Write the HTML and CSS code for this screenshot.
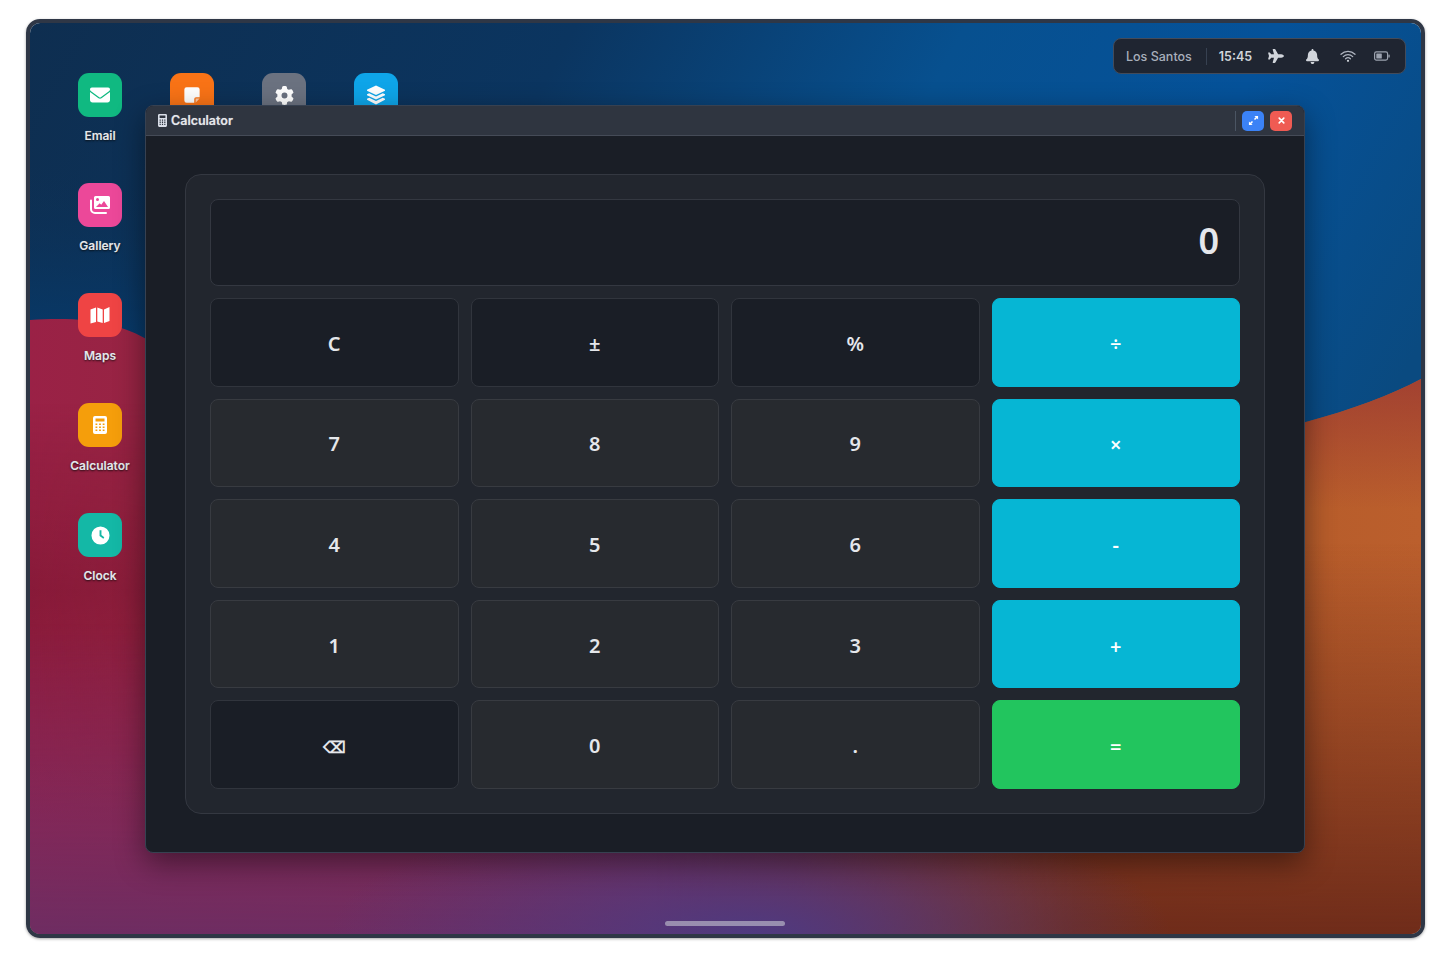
FILE: index.html
```html
<!DOCTYPE html>
<html lang="en">
<head>
  <meta charset="UTF-8" />
  <title>Calculator</title>
  <link rel="stylesheet" href="styles.css">
</head>
<body>
  <div class="frame">
    <svg class="wallpaper" viewBox="0 0 1390 911" preserveAspectRatio="none">
      <defs>
        <linearGradient id="sky" x1="0" y1="0" x2="1" y2="0.35">
          <stop offset="0" stop-color="#0e2e50"/>
          <stop offset="0.35" stop-color="#0b3560"/>
          <stop offset="0.6" stop-color="#07508f"/>
          <stop offset="0.8" stop-color="#05529a"/>
          <stop offset="1" stop-color="#0a4a80"/>
        </linearGradient>
        <linearGradient id="skyLow" x1="0" y1="0" x2="0" y2="1">
          <stop offset="0" stop-color="#0e2e50" stop-opacity="0"/>
          <stop offset="1" stop-color="#043e74"/>
        </linearGradient>
        <linearGradient id="land" x1="0" y1="0" x2="1" y2="0">
          <stop offset="0" stop-color="#9a2146"/>
          <stop offset="0.5" stop-color="#8c3536"/>
          <stop offset="0.93" stop-color="#b85d2b"/>
          <stop offset="1" stop-color="#bb5f2d"/>
        </linearGradient>
        <linearGradient id="crest" x1="0" y1="0" x2="0" y2="1">
          <stop offset="0" stop-color="#9c3a32" stop-opacity=".8"/>
          <stop offset="1" stop-color="#9c3a32" stop-opacity="0"/>
        </linearGradient>
        <linearGradient id="shade" x1="0" y1="0" x2="0" y2="1">
          <stop offset="0" stop-color="#7c1530" stop-opacity="0"/>
          <stop offset="0.45" stop-color="#7c1530" stop-opacity=".6"/>
          <stop offset="1" stop-color="#7c1530" stop-opacity="0"/>
        </linearGradient>
        <linearGradient id="dusk" x1="0" y1="0" x2="0" y2="1">
          <stop offset="0" stop-color="#7a2a66" stop-opacity="0"/>
          <stop offset="1" stop-color="#6e2d62"/>
        </linearGradient>
        <linearGradient id="duskRight" x1="0" y1="0" x2="0" y2="1">
          <stop offset="0" stop-color="#6f2c1a" stop-opacity="0"/>
          <stop offset="1" stop-color="#6f2c1a"/>
        </linearGradient>
        <linearGradient id="fadeLeft" x1="0" y1="0" x2="1" y2="0">
          <stop offset="0" stop-color="#fff"/>
          <stop offset="0.55" stop-color="#fff"/>
          <stop offset="0.8" stop-color="#000"/>
        </linearGradient>
        <linearGradient id="fadeRight" x1="0" y1="0" x2="1" y2="0">
          <stop offset="0.45" stop-color="#000"/>
          <stop offset="0.75" stop-color="#fff"/>
        </linearGradient>
        <linearGradient id="fadeStrip" x1="0" y1="0" x2="1" y2="0">
          <stop offset="0" stop-color="#fff"/>
          <stop offset="0.35" stop-color="#000"/>
        </linearGradient>
        <mask id="leftOnly"><rect width="1390" height="911" fill="url(#fadeLeft)"/></mask>
        <mask id="rightOnly"><rect width="1390" height="911" fill="url(#fadeRight)"/></mask>
        <mask id="stripOnly"><rect width="1390" height="911" fill="url(#fadeStrip)"/></mask>
        <radialGradient id="glow" cx="0.5" cy="0.5" r="0.5">
          <stop offset="0" stop-color="#4f3a80"/>
          <stop offset="1" stop-color="#4f3a80" stop-opacity="0"/>
        </radialGradient>
        <clipPath id="landClip"><path d="M0 297C55 293 90 300 120 318C330 450 900 500 1275 399C1320 387 1360 372 1390 356V911H0Z"/></clipPath>
      </defs>
      <rect width="1390" height="911" fill="url(#sky)"/>
      <rect y="120" width="420" height="240" fill="url(#skyLow)"/>
      <path d="M0 297C55 293 90 300 120 318C330 450 900 500 1275 399C1320 387 1360 372 1390 356V911H0Z" fill="url(#land)"/>
      <rect x="1200" y="356" width="190" height="130" fill="url(#crest)" clip-path="url(#landClip)"/>
      <rect y="380" width="1390" height="420" fill="url(#shade)" mask="url(#stripOnly)"/>
      <rect y="600" width="1390" height="311" fill="url(#dusk)" mask="url(#leftOnly)"/>
      <rect y="520" width="1390" height="391" fill="url(#duskRight)" mask="url(#rightOnly)"/>
      <ellipse cx="720" cy="911" rx="420" ry="130" fill="url(#glow)"/>
    </svg>

    <div class="desktop">
      <div class="app">
        <div class="app-icon green">
          <svg viewBox="0 0 512 512" class="glyph-mail"><path d="M48 64C21.500 64 0 85.500 0 112c0 15.100 7.100 29.300 19.200 38.400L236.800 313.600c11.400 8.500 27 8.500 38.400 0L492.800 150.400c12.100-9.100 19.200-23.300 19.200-38.400c0-26.500-21.500-48-48-48H48zM0 176V384c0 35.300 28.700 64 64 64H448c35.300 0 64-28.700 64-64V176L294.400 339.200c-22.800 17.100-54 17.100-76.800 0L0 176z"/></svg>
        </div>
        <span class="app-name">Email</span>
      </div>
      <div class="app">
        <div class="app-icon orange">
          <svg viewBox="0 0 20 20" class="glyph-note"><path d="M4 1.500h12a2.500 2.500 0 0 1 2.500 2.500v8.500h-4a2 2 0 0 0-2 2v4H4A2.500 2.500 0 0 1 1.500 16V4A2.500 2.500 0 0 1 4 1.500z"/><path d="M14 14h4.500L14 18.500z" opacity=".6"/></svg>
        </div>
      </div>
      <div class="app">
        <div class="app-icon gray">
          <svg viewBox="0 0 512 512" class="glyph"><path d="M495.9 166.6c3.2 8.7 .5 18.4-6.4 24.6l-43.3 39.4c1.1 8.3 1.7 16.8 1.7 25.4s-.6 17.1-1.7 25.4l43.3 39.4c6.9 6.2 9.6 15.9 6.4 24.6c-4.4 11.9-9.7 23.3-15.8 34.3l-4.7 8.1c-6.6 11-14 21.4-22.1 31.2c-5.9 7.2-15.7 9.6-24.5 6.8l-55.7-17.7c-13.4 10.3-28.2 18.9-44 25.4l-12.5 57.1c-2 9.1-9 16.3-18.2 17.8c-13.8 2.3-28 3.5-42.5 3.5s-28.7-1.2-42.5-3.5c-9.2-1.5-16.2-8.7-18.2-17.8l-12.5-57.1c-15.8-6.5-30.6-15.1-44-25.4L83.1 425.9c-8.8 2.8-18.6 .3-24.5-6.8c-8.1-9.8-15.5-20.2-22.1-31.2l-4.7-8.1c-6.1-11-11.4-22.4-15.8-34.3c-3.2-8.7-.5-18.4 6.4-24.6l43.3-39.4C64.6 273.1 64 264.6 64 256s.6-17.1 1.7-25.4L22.4 191.2c-6.9-6.2-9.6-15.9-6.4-24.6c4.4-11.9 9.7-23.3 15.8-34.3l4.7-8.1c6.6-11 14-21.4 22.1-31.2c5.9-7.2 15.7-9.6 24.5-6.8l55.7 17.7c13.4-10.3 28.2-18.9 44-25.4l12.5-57.1c2-9.1 9-16.3 18.2-17.8C227.3 1.2 241.5 0 256 0s28.7 1.2 42.5 3.5c9.2 1.5 16.2 8.7 18.2 17.8l12.5 57.1c15.8 6.5 30.6 15.1 44 25.4l55.7-17.7c8.8-2.8 18.6-.3 24.5 6.8c8.1 9.8 15.5 20.2 22.1 31.2l4.7 8.1c6.1 11 11.4 22.4 15.8 34.3zM256 336a80 80 0 1 0 0-160 80 80 0 1 0 0 160z"/></svg>
        </div>
      </div>
      <div class="app">
        <div class="app-icon sky">
          <svg viewBox="0 0 20 20" class="glyph-layers"><path d="M10 .5l9 4.200v1L10 10 1 5.700v-1z"/><path d="M3.200 8.200L10 11.500l6.800-3.300 2.200 1v1L10 14.500 1 10.200v-1z"/><path d="M3.200 12.700L10 16l6.800-3.300 2.200 1v1L10 19.500 1 14.700v-1z"/></svg>
        </div>
      </div>
      <div class="app first">
        <div class="app-icon pink">
          <svg viewBox="0 0 22 20" class="glyph-wide"><path fill-rule="evenodd" d="M6.500 1h13A1.500 1.500 0 0 1 21 2.500v10a1.500 1.500 0 0 1-1.500 1.500h-13A1.500 1.500 0 0 1 5 12.500v-10A1.500 1.500 0 0 1 6.500 1zM8.500 3a1.500 1.500 0 1 0 0 3 1.500 1.500 0 0 0 0-3zM7 12h12l-4-6-2.800 3.800-1.500-1.500z"/><path d="M1 5.500a1 1 0 0 1 2 0V14a3 3 0 0 0 3 3h11a1 1 0 0 1 0 2H6a5 5 0 0 1-5-5z"/></svg>
        </div>
        <span class="app-name">Gallery</span>
      </div>
      <div class="app first">
        <div class="app-icon red">
          <svg viewBox="0 0 20 20" class="glyph-map"><path d="M.5 4.500L6 2.500V17L.5 18.500z"/><path d="M7.300 2.500L12.700 4.500V18L7.300 16.500z"/><path d="M14 4.500L19.500 2V16L14 18z"/></svg>
        </div>
        <span class="app-name">Maps</span>
      </div>
      <div class="app first">
        <div class="app-icon amber">
          <svg viewBox="0 0 14 18" class="glyph-tall"><path fill-rule="evenodd" d="M2 0h10a2 2 0 0 1 2 2v14a2 2 0 0 1-2 2H2a2 2 0 0 1-2-2V2a2 2 0 0 1 2-2zM2.500 2.500v3h9v-3zM2.500 7.500v1.600h1.800V7.500zM6.100 7.500v1.600h1.800V7.500zM9.700 7.500v1.600h1.800V7.500zM2.500 10.500v1.600h1.800v-1.600zM6.100 10.500v1.600h1.800v-1.600zM9.700 10.500v1.600h1.800v-1.600zM2.500 13.500v1.600h1.800v-1.600zM6.100 13.500v1.600h1.800v-1.600zM9.700 13.500v1.600h1.800v-1.600z"/></svg>
        </div>
        <span class="app-name">Calculator</span>
      </div>
      <div class="app first">
        <div class="app-icon teal">
          <svg viewBox="0 0 20 20" class="glyph"><path fill-rule="evenodd" d="M10 .5a9.500 9.500 0 1 1 0 19 9.500 9.500 0 0 1 0-19zM9 4.500V10.500l4 2.800 1-1.500-3-2.200V4.500z"/></svg>
        </div>
        <span class="app-name">Clock</span>
      </div>
    </div>

    <div class="status-bar">
      <span class="city">Los Santos</span>
      <span class="clock">15:45</span>
      <div class="tray">
        <svg viewBox="0 0 576 512" class="tray-plane"><path d="M482.3 192c34.2 0 93.7 29 93.7 64c0 36-59.5 64-93.7 64l-116.600 0L265.200 495.900c-5.700 10-16.300 16.100-27.800 16.100l-56.200 0c-10.600 0-18.300-10.200-15.400-20.400l49-171.600L112 320 68.800 377.600c-3 4-7.800 6.400-12.800 6.400l-42 0c-7.800 0-14-6.300-14-14c0-1.300 .2-2.600 .5-3.900L32 256 .5 145.900c-.4-1.300-.5-2.600-.5-3.900c0-7.800 6.300-14 14-14l42 0c5 0 9.800 2.400 12.800 6.400L112 192l102.900 0-49-171.600C162.900 10.200 170.600 0 181.200 0l56.200 0c11.500 0 22.100 6.200 27.800 16.100L365.700 192l116.600 0z"/></svg>
        <svg viewBox="0 0 448 512" class="tray-bell"><path d="M224 0c-17.700 0-32 14.300-32 32V51.200C119 66 64 130.600 64 208v18.800c0 47-17.300 92.400-48.500 127.600l-7.400 8.300c-8.400 9.400-10.400 22.900-5.300 34.400S19.400 416 32 416H416c12.600 0 24-7.400 29.200-18.900s3.100-25-5.300-34.400l-7.400-8.300C401.300 319.200 384 273.900 384 226.800V208c0-77.400-55-142-128-156.800V32c0-17.700-14.300-32-32-32zm45.300 493.300c12-12 18.700-28.300 18.700-45.300H224 160c0 17 6.700 33.300 18.700 45.300s28.300 18.700 45.300 18.700s33.300-6.700 45.300-18.700z"/></svg>
        <svg viewBox="0 0 16 12" class="tray-wifi"><path d="M1 4.200a10 10 0 0 1 14 0M3.300 6.600a6.800 6.800 0 0 1 9.400 0M5.600 8.800a3.400 3.400 0 0 1 4.800 0" fill="none" stroke-width="1.300" stroke-linecap="round"/><circle cx="8" cy="10.800" r="1.100" class="wifi-dot"/></svg>
        <svg viewBox="0 0 16 10" class="tray-battery"><rect x=".6" y=".9" width="13" height="8.200" rx="1.800" fill="none" stroke-width="1.200"/><rect x="2.300" y="2.600" width="5.500" height="4.800" rx=".5" class="batt-fill"/><rect x="14.400" y="3.500" width="1.300" height="3" rx=".6" class="batt-fill"/></svg>
      </div>
    </div>

    <div class="window">
      <div class="title-bar">
        <svg viewBox="0 0 14 18" class="title-icon" preserveAspectRatio="none"><path fill-rule="evenodd" d="M2 0h10a2 2 0 0 1 2 2v14a2 2 0 0 1-2 2H2a2 2 0 0 1-2-2V2a2 2 0 0 1 2-2zM2.500 2v3.500h9V2zM2.500 7.500v1.800h1.800V7.500zM6.100 7.500v1.800h1.800V7.500zM9.700 7.500v1.800h1.800V7.500zM2.500 10.500v1.800h1.800v-1.800zM6.100 10.500v1.800h1.800v-1.800zM9.700 10.500v1.800h1.800v-1.800zM2.500 13.500v1.800h1.800v-1.800zM6.100 13.500v1.800h1.800v-1.800zM9.700 13.500v1.800h1.800v-1.800z"/></svg>
        <span class="title-text">Calculator</span>
        <div class="title-actions">
          <button class="win-btn blue">
            <svg viewBox="0 0 12 12"><path d="M7 1h4v4L9.600 3.600 7.700 5.500 6.500 4.300l1.900-1.900zM5 11H1V7l1.400 1.400 1.900-1.900 1.200 1.200-1.900 1.900z"/></svg>
          </button>
          <button class="win-btn close">
            <svg viewBox="0 0 12 12"><path d="M3.500 3.500l5 5M8.500 3.500l-5 5" fill="none" stroke="#fff" stroke-width="1.800" stroke-linecap="round"/></svg>
          </button>
        </div>
      </div>
      <div class="window-body">
        <div class="calc">
          <div class="display">0</div>
          <div class="keys">
            <button class="key dark">C</button>
            <button class="key dark">±</button>
            <button class="key dark">%</button>
            <button class="key op">÷</button>
            <button class="key">7</button>
            <button class="key">8</button>
            <button class="key">9</button>
            <button class="key op low">×</button>
            <button class="key">4</button>
            <button class="key">5</button>
            <button class="key">6</button>
            <button class="key op">-</button>
            <button class="key">1</button>
            <button class="key">2</button>
            <button class="key">3</button>
            <button class="key op low">+</button>
            <button class="key dark back">⌫</button>
            <button class="key">0</button>
            <button class="key">.</button>
            <button class="key equals low">=</button>
          </div>
        </div>
      </div>
    </div>

    <div class="home-bar"></div>
  </div>
</body>
</html>
```

FILE: styles.css
```css
html, body {
  margin: 0;
  height: 100%;
}
body {
  background: #fff;
  font-family: Inter, 'Liberation Sans', sans-serif;
  padding: 19px 27px 22px 26px;
  box-sizing: border-box;
}

.frame {
  position: relative;
  height: 919px;
  box-sizing: border-box;
  border: 4px solid #2f3746;
  border-radius: 14px;
  overflow: hidden;
  box-shadow: 0 1px 3px rgba(0, 0, 0, 0.35);
}
.wallpaper {
  position: absolute;
  top: 0; left: 0;
  width: 100%; height: 100%;
}

/* Desktop icons */
.desktop {
  position: absolute;
  top: 50px;
  left: 24px;
  display: grid;
  grid-template-columns: repeat(4, 92px);
  grid-auto-rows: 110px;
}
.app {
  display: flex;
  flex-direction: column;
  align-items: center;
}
.app.first {
  grid-column: 1;
}
.app-icon {
  width: 44px;
  height: 44px;
  border-radius: 11px;
  display: flex;
  align-items: center;
  justify-content: center;
}
.app-icon svg {
  fill: #fff;
}
.glyph { width: 19px; height: 19px; }
.glyph-mail { width: 20px; height: 20px; }
.glyph-layers { width: 20px; height: 20px; }
.glyph-map { width: 22px; height: 20px; }
.glyph-wide { width: 22px; height: 20px; }
.glyph-tall { width: 14px; height: 18px; }
.glyph-note { width: 18px; height: 18px; }
.green { background: #10b981; }
.orange { background: #f97316; }
.gray { background: #6b7280; }
.sky { background: #0ea5e9; }
.pink { background: #ec4899; }
.red { background: #ef4444; }
.amber { background: #f59e0b; }
.teal { background: #14b8a6; }
.app-name {
  margin-top: 11px;
  font-size: 12px;
  line-height: 16px;
  font-weight: 600;
  color: #e5e7eb;
  text-shadow: 0 1px 2px rgba(0, 0, 0, 0.8), 0 0 1px rgba(229, 231, 235, 0.4);
}

/* Status bar */
.status-bar {
  position: absolute;
  top: 15px;
  right: 15px;
  width: 293px;
  height: 36px;
  box-sizing: border-box;
  padding: 0 12px;
  display: flex;
  align-items: center;
  background: #1f2531;
  border: 1px solid #434b5a;
  border-radius: 8px;
}
.city {
  font-size: 12.5px;
  font-weight: 500;
  color: #a8afbb;
  padding: 1px 14px 0 0;
  border-right: 1px solid #374151;
  line-height: 16px;
}
.clock {
  font-size: 12.5px;
  font-weight: 600;
  color: #d1d5db;
  padding-top: 1px;
  margin-left: 12px;
}
.tray {
  display: flex;
  align-items: center;
  margin-left: 16px;
}
.tray svg {
  fill: #d1d5db;
  stroke: none;
}
.tray-plane { width: 16px; height: 14px; margin-right: 22px; }
.tray-bell { width: 13px; height: 15px; margin-right: 21px; }
.tray-wifi { width: 16px; height: 12px; margin-right: 18px; }
.tray-wifi path { stroke: #aeb4bf; }
.tray-wifi .wifi-dot { fill: #d1d5db; }
.tray-battery { width: 16px; height: 10px; }
.tray svg.tray-battery { fill: none; }
.tray-battery rect { stroke: #9ca3af; }
.tray-battery .batt-fill { fill: #9ca3af; stroke: none; }

/* Window */
.window {
  position: absolute;
  top: 82px;
  left: 115px;
  width: 1160px;
  height: 748px;
  box-sizing: border-box;
  display: flex;
  flex-direction: column;
  background: #1a1e26;
  border: 1px solid #374151;
  border-radius: 8px;
  overflow: hidden;
  box-shadow: 0 10px 30px rgba(0, 0, 0, 0.45);
}
.title-bar {
  height: 30px;
  box-sizing: border-box;
  flex-shrink: 0;
  display: flex;
  align-items: center;
  padding: 0 12px;
  background: #2f3540;
  border-bottom: 1px solid #454b57;
}
.title-icon {
  width: 9px;
  height: 13px;
  fill: #d9dee8;
  margin-right: 4px;
}
.title-text {
  font-size: 12.5px;
  font-weight: 600;
  color: #e5e7eb;
  text-shadow: 0 0 1px rgba(229, 231, 235, 0.5);
}
.title-actions {
  margin-left: auto;
  display: flex;
  align-items: center;
  gap: 6px;
  padding-left: 6px;
  border-left: 1px solid #4b5563;
}
.win-btn {
  width: 22px;
  height: 20px;
  padding: 0;
  border: none;
  border-radius: 5px;
  display: flex;
  align-items: center;
  justify-content: center;
}
.win-btn svg {
  width: 11px;
  height: 11px;
  fill: #fff;
}
.blue { background: #3b82f6; }
.close { background: #ef5b53; }

.window-body {
  flex: 1;
  min-height: 0;
  padding: 38px 39px;
  display: flex;
}
.calc {
  flex: 1;
  box-sizing: border-box;
  padding: 24px;
  display: flex;
  flex-direction: column;
  gap: 12px;
  background: #22262e;
  border: 1px solid #343841;
  border-radius: 16px;
}
.display {
  height: 87px;
  box-sizing: border-box;
  padding: 0 20px 5px;
  display: flex;
  align-items: center;
  justify-content: flex-end;
  font-family: 'Noto Sans', sans-serif;
  font-size: 36px;
  font-weight: 600;
  color: #e5e7eb;
  background: #1a1e26;
  border: 1px solid #343841;
  border-radius: 8px;
}
.keys {
  flex: 1;
  display: grid;
  grid-template-columns: repeat(4, 1fr);
  grid-template-rows: repeat(5, 1fr);
  gap: 12px;
}
.key {
  font-family: 'Noto Sans', sans-serif;
  font-size: 20px;
  font-weight: 600;
  color: #e5e7eb;
  background: #272a2f;
  border: 1px solid #383b41;
  border-radius: 8px;
  padding: 2px 0 0;
}
.key.dark {
  background: #1a1e26;
  border-color: #31353d;
}
.key.back {
  font-size: 16px;
  padding-top: 4px;
}
.key.op {
  background: #06b6d4;
  border-color: #06b6d4;
  color: #fff;
}
.key.equals {
  background: #22c55e;
  border-color: #22c55e;
  color: #fff;
}
.key.low {
  padding-top: 4px;
}

.home-bar {
  position: absolute;
  bottom: 8px;
  left: 635px;
  width: 120px;
  height: 5px;
  border-radius: 3px;
  background: rgba(209, 213, 219, 0.55);
}
```
